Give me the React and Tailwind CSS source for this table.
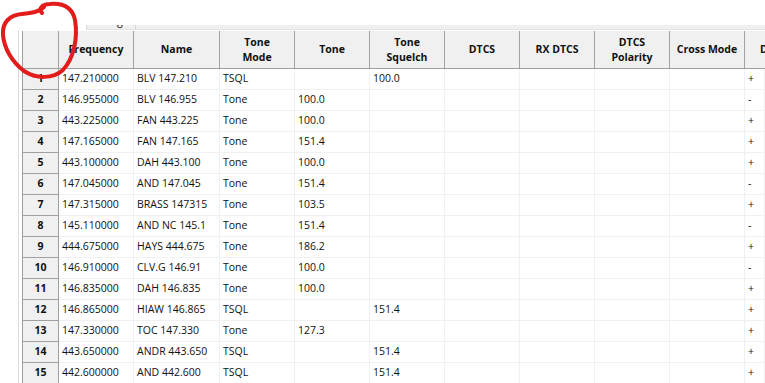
import React from 'react';

const rows = [
  ['147.210000', 'BLV 147.210', 'TSQL', '', '100.0', '+'],
  ['146.955000', 'BLV 146.955', 'Tone', '100.0', '', '-'],
  ['443.225000', 'FAN 443.225', 'Tone', '100.0', '', '+'],
  ['147.165000', 'FAN 147.165', 'Tone', '151.4', '', '+'],
  ['443.100000', 'DAH 443.100', 'Tone', '100.0', '', '+'],
  ['147.045000', 'AND 147.045', 'Tone', '151.4', '', '-'],
  ['147.315000', 'BRASS 147315', 'Tone', '103.5', '', '+'],
  ['145.110000', 'AND NC 145.1', 'Tone', '151.4', '', '-'],
  ['444.675000', 'HAYS 444.675', 'Tone', '186.2', '', '+'],
  ['146.910000', 'CLV.G 146.91', 'Tone', '100.0', '', '-'],
  ['146.835000', 'DAH 146.835', 'Tone', '100.0', '', '+'],
  ['146.865000', 'HIAW 146.865', 'TSQL', '', '151.4', '+'],
  ['147.330000', 'TOC 147.330', 'Tone', '127.3', '', '+'],
  ['443.650000', 'ANDR 443.650', 'TSQL', '', '151.4', '+'],
  ['442.600000', 'AND 442.600', 'TSQL', '', '151.4', '+'],
];

const headers = [
  ['Frequency'],
  ['Name'],
  ['Tone', 'Mode'],
  ['Tone'],
  ['Tone', 'Squelch'],
  ['DTCS'],
  ['RX DTCS'],
  ['DTCS', 'Polarity'],
  ['Cross Mode'],
];

const gridCols = 'grid grid-cols-[37px_75px_86px_75px_75px_75px_75px_75px_75px_75px_1fr]';

function HeaderCell({ lines }) {
  return (
    <div className="flex flex-col items-center justify-center h-[38px] bg-[#f0f0f0] border-r border-b border-[#a0a0a0] font-bold leading-[15px] whitespace-nowrap overflow-hidden">
      {lines.map((l) => (
        <span key={l}>{l}</span>
      ))}
    </div>
  );
}

function Cell({ children }) {
  return (
    <div className="h-[21px] flex items-center pl-[3px] border-r border-b border-[#f0f0f0] whitespace-nowrap overflow-hidden">
      {children}
    </div>
  );
}

export default function App() {
  return (
    <div className="relative w-[765px] h-[383px] bg-white overflow-hidden text-[10.5px] text-[#111] font-['Segoe_UI','Open_Sans',sans-serif]">
      {/* top strip */}
      <div className="h-[31px] flex flex-col justify-end">
        <div className="ml-[86px] mb-[1px] h-[5px] flex bg-[#f0f0f0] border-b border-[#e3e3e3]">
          <div className="w-[50px] h-full border-l border-r border-[#d4d4d4] overflow-hidden">
            <div className="-mt-[11px] pl-[30px] whitespace-nowrap">g</div>
          </div>
        </div>
      </div>

      <div className="ml-[18px] h-full border-l border-[#dadada] pl-[3px]">
        <div className={gridCols}>
          <div className="h-[38px] bg-[#f0f0f0] border-l border-r border-b border-[#a0a0a0]" />
          {headers.map((h) => (
            <HeaderCell key={h.join(' ')} lines={h} />
          ))}
          <div className="h-[38px] flex items-center pl-[15px] bg-[#f0f0f0] border-b border-[#a0a0a0] font-bold overflow-hidden">
            D
          </div>

          {rows.map((r, i) => (
            <React.Fragment key={i}>
              <div className="h-[21px] flex items-center justify-center bg-[#f0f0f0] border-l border-r border-b border-[#a0a0a0] font-bold">
                {i + 1}
              </div>
              <Cell>{r[0]}</Cell>
              <Cell>{r[1]}</Cell>
              <Cell>{r[2]}</Cell>
              <Cell>{r[3]}</Cell>
              <Cell>{r[4]}</Cell>
              <Cell />
              <Cell />
              <Cell />
              <Cell />
              <Cell>{r[5]}</Cell>
            </React.Fragment>
          ))}
        </div>
      </div>

      {/* red annotation circle */}
      <svg className="absolute left-0 top-0" width="82" height="84" viewBox="0 0 82 84" fill="none">
        <path
          d="M42 13 C38 9 42 4 50 4 C62 3 72 6 75 20 C78 38 74 58 63 70 C53 79 36 79 24 71 C12 62 4 48 3 35 C2 22 10 15 22 14 C32 13 39 12 44 7"
          stroke="#e21b1b"
          strokeWidth="4"
          strokeLinecap="round"
          strokeLinejoin="round"
        />
      </svg>
    </div>
  );
}
